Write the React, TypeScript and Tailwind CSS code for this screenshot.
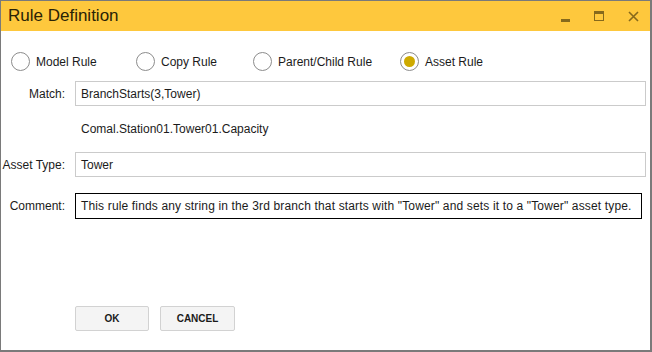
import { FC } from 'react';

type RadioProps = {
  label: string;
  checked?: boolean;
  width: string;
};

const Radio: FC<RadioProps> = ({ label, checked, width }) => (
  <div className={`flex items-center gap-[6px] ${width}`}>
    <span className="flex h-[19px] w-[19px] items-center justify-center rounded-full border border-[#8c8c8c] bg-white">
      {checked && <span className="h-[11px] w-[11px] rounded-full bg-[#ceaa00]" />}
    </span>
    <span className="text-[12px] text-[#1b1b1b]">{label}</span>
  </div>
);

const Label: FC<{ text: string }> = ({ text }) => (
  <span className="w-[64px] shrink-0 text-right text-[12px] text-[#1b1b1b]">{text}</span>
);

const App: FC = () => {
  return (
    <div
      className="flex h-[352px] w-[652px] flex-col border-t border-l border-r-2 border-b-2 border-[#7a7a7a] bg-white"
      style={{ fontFamily: '"Liberation Sans", Arial, sans-serif' }}
    >
      {/* title bar */}
      <div className="flex h-[30px] shrink-0 items-center bg-[#fec83d] pl-[7px]">
        <span className="flex-1 text-[17px] text-[#2a2306]">Rule Definition</span>
        <div className="flex items-center">
          <span className="flex h-[30px] w-[34px] items-center justify-center">
            <span className="mt-[8px] block h-[3px] w-[9px] bg-[#86691c]" />
          </span>
          <span className="flex h-[30px] w-[34px] items-center justify-center">
            <span className="block h-[10px] w-[10px] border-[1.5px] border-t-[3px] border-[#86691c]" />
          </span>
          <span className="flex h-[30px] w-[34px] items-center justify-center">
            <svg width="11" height="11" viewBox="0 0 11 11">
              <path d="M1 1 L10 10 M10 1 L1 10" stroke="#86691c" strokeWidth="1.6" />
            </svg>
          </span>
        </div>
      </div>

      {/* rule type radios */}
      <div className="mt-[21px] flex items-center pl-[10px]">
        <Radio label="Model Rule" width="w-[125px]" />
        <Radio label="Copy Rule" width="w-[117px]" />
        <Radio label="Parent/Child Rule" width="w-[147px]" />
        <Radio label="Asset Rule" checked width="w-[120px]" />
      </div>

      <div className="mt-[10px] flex flex-col pr-[4px]">
        <div className="flex items-center gap-[10px]">
          <Label text="Match:" />
          <div className="flex h-[25px] flex-1 items-center border border-[#cbcbcb] px-[5px] text-[12px] text-[#1b1b1b]">
            BranchStarts(3,Tower)
          </div>
        </div>

        <div className="flex h-[46px] items-center pl-[80px] text-[12px] text-[#1b1b1b]">
          Comal.Station01.Tower01.Capacity
        </div>

        <div className="flex items-center gap-[10px]">
          <Label text="Asset Type:" />
          <div className="flex h-[25px] flex-1 items-center border border-[#cbcbcb] px-[5px] text-[12px] text-[#1b1b1b]">
            Tower
          </div>
        </div>

        <div className="mt-[16px] flex items-center gap-[10px] pr-[4px]">
          <Label text="Comment:" />
          <div className="flex h-[26px] flex-1 items-center border border-black px-[5px] text-[12px] tracking-[0.15px] text-[#1b1b1b]">
            This rule finds any string in the 3rd branch that starts with "Tower" and sets it to a "Tower" asset type.
          </div>
        </div>
      </div>

      <div className="mt-auto mb-[19px] flex gap-[11px] pl-[74px]">
        <button className="h-[25px] w-[74px] rounded-[2px] border border-[#d2d2d2] bg-[#f4f4f4] text-[10px] font-bold text-[#1b1b1b]">
          OK
        </button>
        <button className="h-[25px] w-[75px] rounded-[2px] border border-[#d2d2d2] bg-[#f4f4f4] text-[10px] font-bold text-[#1b1b1b]">
          CANCEL
        </button>
      </div>
    </div>
  );
};

export default App;
